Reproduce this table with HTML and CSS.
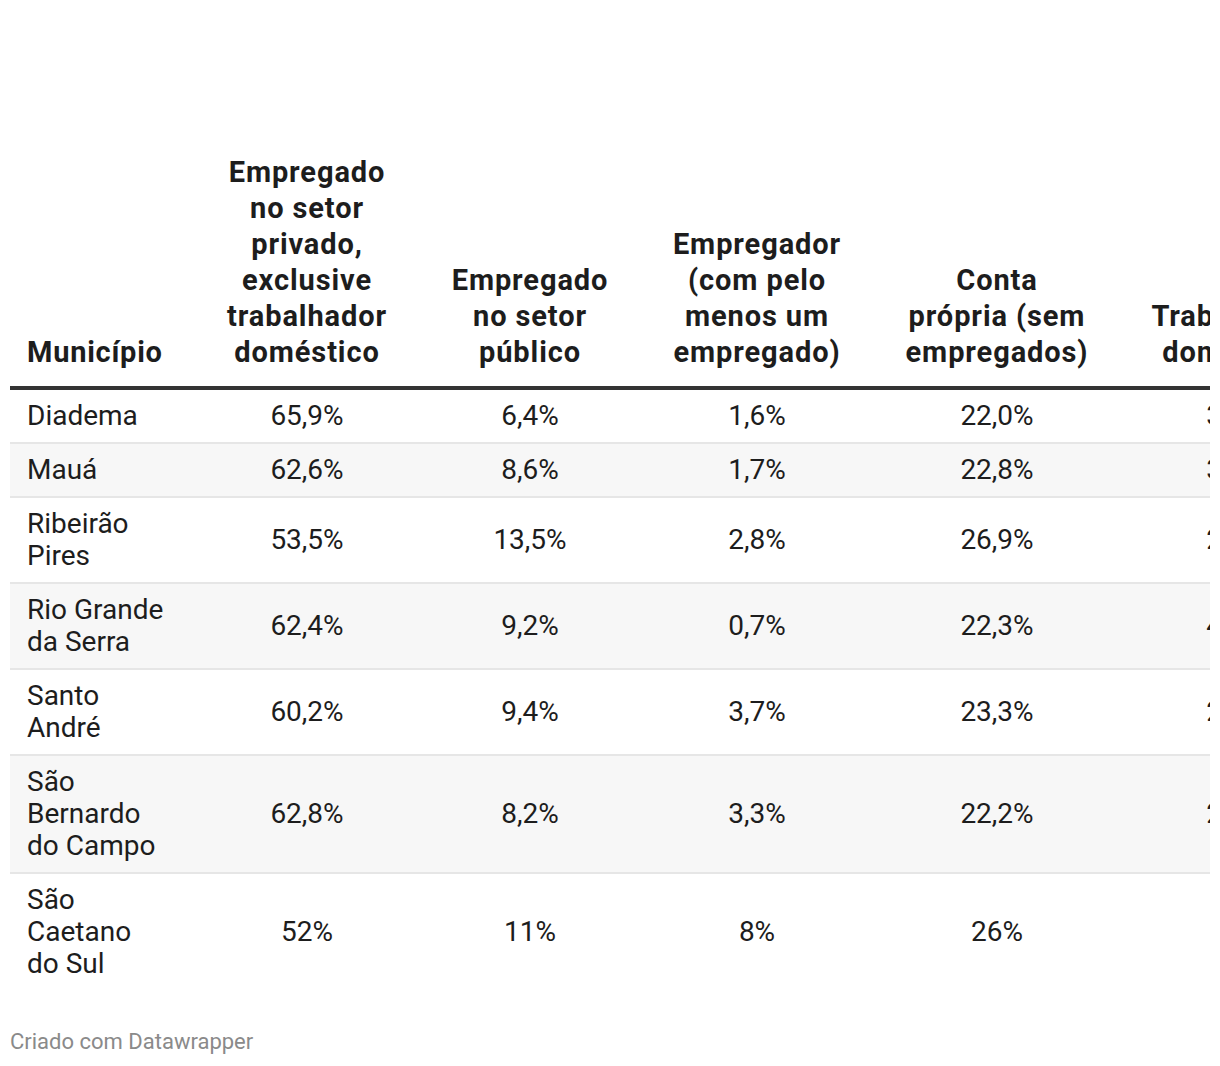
FILE: index.html
```html
<!DOCTYPE html>
<html lang="pt">
<head>
<meta charset="utf-8">
<title>Tabela</title>
<link rel="stylesheet" href="styles.css">
</head>
<body>
<div class="chart">
  <div class="table-wrap">
    <table class="dw-table">
      <colgroup>
        <col class="c1"><col class="c2"><col class="c3"><col class="c4"><col class="c5"><col class="c6">
      </colgroup>
      <thead>
        <tr>
          <th class="left">Município</th>
          <th>Empregado no setor privado, exclusive trabalhador doméstico</th>
          <th>Empregado no setor público</th>
          <th>Empregador (com pelo menos um empregado)</th>
          <th class="wide">Conta própria (sem empregados)</th>
          <th>Trabalhador doméstico</th>
        </tr>
      </thead>
      <tbody>
        <tr><td class="left">Diadema</td><td>65,9%</td><td>6,4%</td><td>1,6%</td><td>22,0%</td><td>3,8%</td></tr>
        <tr class="alt"><td class="left">Mauá</td><td>62,6%</td><td>8,6%</td><td>1,7%</td><td>22,8%</td><td>3,9%</td></tr>
        <tr><td class="left">Ribeirão Pires</td><td>53,5%</td><td>13,5%</td><td>2,8%</td><td>26,9%</td><td>2,9%</td></tr>
        <tr class="alt"><td class="left">Rio Grande da Serra</td><td>62,4%</td><td>9,2%</td><td>0,7%</td><td>22,3%</td><td>4,1%</td></tr>
        <tr><td class="left">Santo André</td><td>60,2%</td><td>9,4%</td><td>3,7%</td><td>23,3%</td><td>2,8%</td></tr>
        <tr class="alt"><td class="left">São Bernardo do Campo</td><td>62,8%</td><td>8,2%</td><td>3,3%</td><td>22,2%</td><td>2,9%</td></tr>
        <tr class="last"><td class="left">São Caetano do Sul</td><td>52%</td><td>11%</td><td>8%</td><td>26%</td><td>2%</td></tr>
      </tbody>
    </table>
  </div>
  <div class="footer">Criado com Datawrapper</div>
</div>
</body>
</html>
```

FILE: styles.css
```css
html, body {
  margin: 0;
  padding: 0;
  background: #ffffff;
}

body {
  font-family: Roboto, "Liberation Sans", sans-serif;
  color: #1d1d1d;
}

.chart {
  padding: 146px 10px 0 10px;
}

.table-wrap {
  width: 1200px;
  overflow: hidden;
}

.dw-table {
  table-layout: fixed;
  border-collapse: collapse;
  width: 1339px;
}

.c1 { width: 185px; }
.c2 { width: 224px; }
.c3 { width: 222px; }
.c4 { width: 232px; }
.c5 { width: 248px; }
.c6 { width: 228px; }

.dw-table th {
  font-weight: 700;
  font-size: 29px;
  letter-spacing: 0.9px;
  line-height: 36px;
  text-align: center;
  vertical-align: bottom;
  padding: 8px 29px 16px 29px;
  border-bottom: 4px solid #333333;
  color: #1d1d1d;
}

.dw-table th.wide {
  padding-left: 31px;
  padding-right: 31px;
}

.dw-table td {
  font-size: 28px;
  line-height: 32px;
  text-align: center;
  vertical-align: middle;
  padding: 10px 29px;
  border-bottom: 2px solid #e6e6e6;
  color: #1d1d1d;
}

.dw-table .left {
  text-align: left;
  padding-left: 17px;
  padding-right: 29px;
}

.dw-table th.left {
  letter-spacing: 0.75px;
}

.dw-table tr.alt td {
  background: #f7f7f7;
}

.dw-table tr.last td {
  border-bottom: none;
}

.footer {
  margin-top: 40px;
  font-size: 22px;
  line-height: 24px;
  color: #8a8a8a;
}
```
